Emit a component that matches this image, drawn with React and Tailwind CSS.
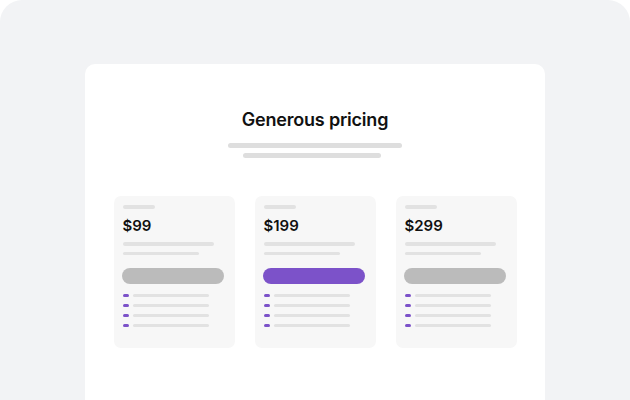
import React from 'react';

const plans = [
  { price: '$99', featured: false },
  { price: '$199', featured: true },
  { price: '$299', featured: false },
];

const PlanCard = ({ plan }) => (
  <div className="w-[121px] h-[152px] rounded-[7px] bg-[#f7f7f7] pl-[9px] pr-[9px] pt-[9px]">
    <div className="w-[32px] h-[4px] rounded-full bg-[#e2e2e2]" />
    <div className="mt-[7px] text-[15px] leading-[20px] font-semibold text-[#111]">
      {plan.price}
    </div>
    <div className="mt-[6px] w-[91px] h-[4px] rounded-full bg-[#e2e2e2]" />
    <div className="mt-[6px] w-[76px] h-[3px] rounded-full bg-[#e2e2e2]" />
    <div
      className={`-ml-px mt-[13px] w-[102px] h-[16px] rounded-full ${
        plan.featured ? 'bg-[#7c52c9]' : 'bg-[#bbbbbb]'
      }`}
    />
    {/* Features */}
    <div className="mt-[10px] flex flex-col gap-[7px]">
      {[0, 1, 2, 3].map((i) => (
        <div key={i} className="flex items-center gap-[4px]">
          <div className="w-[6px] h-[3px] rounded-full bg-[#7c52c9]" />
          <div className="w-[76px] h-[3px] rounded-full bg-[#e2e2e2]" />
        </div>
      ))}
    </div>
  </div>
);

export default function App() {
  return (
    <div className="w-[630px] h-[400px] bg-white overflow-hidden" style={{ fontFamily: 'Inter, "Noto Sans", sans-serif' }}>
      <div className="w-full h-full bg-[#f2f3f5] rounded-t-[22px] pt-[64px]">
        <div className="mx-auto w-[460px] h-[360px] bg-white rounded-[10px] pt-[42px]">
          <h2 className="text-center text-[18px] leading-[28px] font-semibold text-[#111] tracking-[-0.2px]">
            Generous pricing
          </h2>
          <div className="mt-[9px] flex flex-col items-center gap-[5px]">
            <div className="w-[174px] h-[5px] rounded-full bg-[#dedede]" />
            <div className="mr-[6px] w-[138px] h-[5px] rounded-full bg-[#dedede]" />
          </div>
          <div className="mt-[38px] flex justify-center gap-[20px]">
            {plans.map((plan) => (
              <PlanCard key={plan.price} plan={plan} />
            ))}
          </div>
        </div>
      </div>
    </div>
  );
}
